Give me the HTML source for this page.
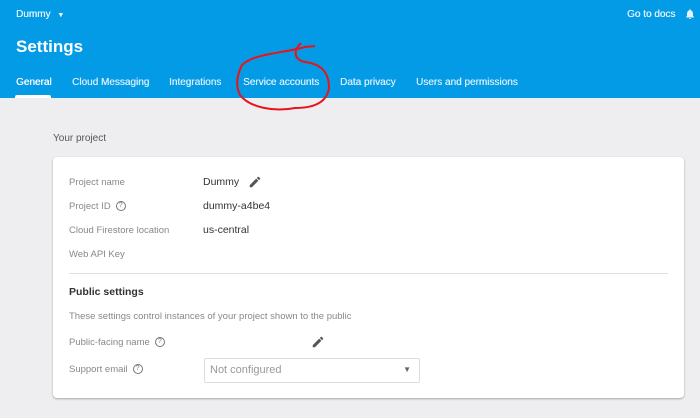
<!DOCTYPE html>
<html><head><style>
body{margin:0;width:700px;height:418px;background:#eeeef1;font-family:"Liberation Sans",sans-serif;position:relative;overflow:hidden}
.hdr{position:absolute;left:0;top:0;width:700px;height:98px;background:#039be5;color:#fff}
.a{position:absolute;white-space:nowrap}
.tab{position:absolute;top:77px;font-size:10px;font-weight:normal;color:#d4ecfb;text-shadow:0.3px 0 0 currentColor}
.card{position:absolute;left:53px;top:157px;width:631px;height:241px;background:#fff;border-radius:4px;box-shadow:0 1px 2px rgba(0,0,0,.3)}
.l{position:absolute;left:16px;font-size:9.5px;color:#888}
.v{position:absolute;left:150px;font-size:10.5px;color:#333}
.q{display:inline-block;width:8px;height:8px;border:1px solid #777;border-radius:50%;font-size:7px;text-align:center;line-height:8px;color:#777;margin-left:5px;vertical-align:middle}
</style></head><body>
<div class="hdr">
<div class="a" style="left:16px;top:9px;font-size:10px;color:#e3f2fd;text-shadow:0.3px 0 0 #e3f2fd">Dummy <span style="font-size:7px;margin-left:4px">▼</span></div>
<div class="a" style="left:627px;top:9px;font-size:10px;color:#e3f2fd;text-shadow:0.3px 0 0 #e3f2fd">Go to docs</div>
<svg class="a" style="left:684px;top:7px" width="12" height="14" viewBox="0 0 24 24"><path fill="#e3f2fd" d="M12 22a2 2 0 0 0 2-2h-4a2 2 0 0 0 2 2zm6-6v-5c0-3-1.6-5.6-4.5-6.3V4a1.5 1.5 0 0 0-3 0v.7C7.6 5.4 6 8 6 11v5l-2 2v1h16v-1z"/></svg>
<div class="a" style="left:16px;top:37px;font-size:17px;font-weight:bold;color:#fff">Settings</div>
<div class="tab" style="left:16px;color:#fff">General</div>
<div class="a" style="left:15px;top:95px;width:36px;height:3px;background:#fff;border-radius:2px 2px 0 0"></div>
<div class="tab" style="left:72px">Cloud Messaging</div>
<div class="tab" style="left:169px">Integrations</div>
<div class="tab" style="left:243px">Service accounts</div>
<div class="tab" style="left:340px">Data privacy</div>
<div class="tab" style="left:416px">Users and permissions</div>
</div>
<svg class="a" style="left:235px;top:40px" width="100" height="74"><path d="M80 6 L70 7 C60 10 45 12 35 14 C25 16 15 18 7 25 C2 35 0 45 5 55 C15 68 40 72 60 68 C80 68 92 62 94 48 C94 32 86 24 70 22 C60 20 57 12 66 3" fill="none" stroke="#e8141a" stroke-width="2"/></svg>
<div class="a" style="left:53px;top:133px;font-size:10px;color:#555">Your project</div>
<div class="card">
<div class="l" style="top:20px">Project name</div><div class="v" style="top:19px">Dummy</div>
<svg class="a" style="left:195px;top:18px" width="14" height="14" viewBox="0 0 24 24"><path fill="#555" d="M3 17.25V21h3.75L17.8 9.94l-3.75-3.75zM20.7 7.04a1 1 0 0 0 0-1.41l-2.34-2.34a1 1 0 0 0-1.41 0l-1.83 1.83 3.75 3.75z"/></svg>
<div class="l" style="top:44px">Project ID<span class="q">?</span></div><div class="v" style="top:43px">dummy-a4be4</div>
<div class="l" style="top:68px">Cloud Firestore location</div><div class="v" style="top:67px">us-central</div>
<div class="l" style="top:92px">Web API Key</div>
<div class="a" style="left:16px;top:116px;width:599px;height:1px;background:#e0e0e0"></div>
<div class="a" style="left:16px;top:129px;font-size:10.5px;font-weight:bold;color:#333">Public settings</div>
<div class="l" style="top:154px">These settings control instances of your project shown to the public</div>
<div class="l" style="top:180px">Public-facing name<span class="q">?</span></div>
<svg class="a" style="left:258px;top:178px" width="14" height="14" viewBox="0 0 24 24"><path fill="#555" d="M3 17.25V21h3.75L17.8 9.94l-3.75-3.75zM20.7 7.04a1 1 0 0 0 0-1.41l-2.34-2.34a1 1 0 0 0-1.41 0l-1.83 1.83 3.75 3.75z"/></svg>
<div class="l" style="top:207px">Support email<span class="q">?</span></div>
<div class="a" style="left:151px;top:201px;width:214px;height:23px;border:1px solid #ddd;border-radius:2px"><span style="position:absolute;left:5px;top:5px;font-size:11px;color:#999">Not configured</span><span style="position:absolute;right:8px;top:6px;font-size:8px;color:#666">▼</span></div>
</div>
</body></html>
